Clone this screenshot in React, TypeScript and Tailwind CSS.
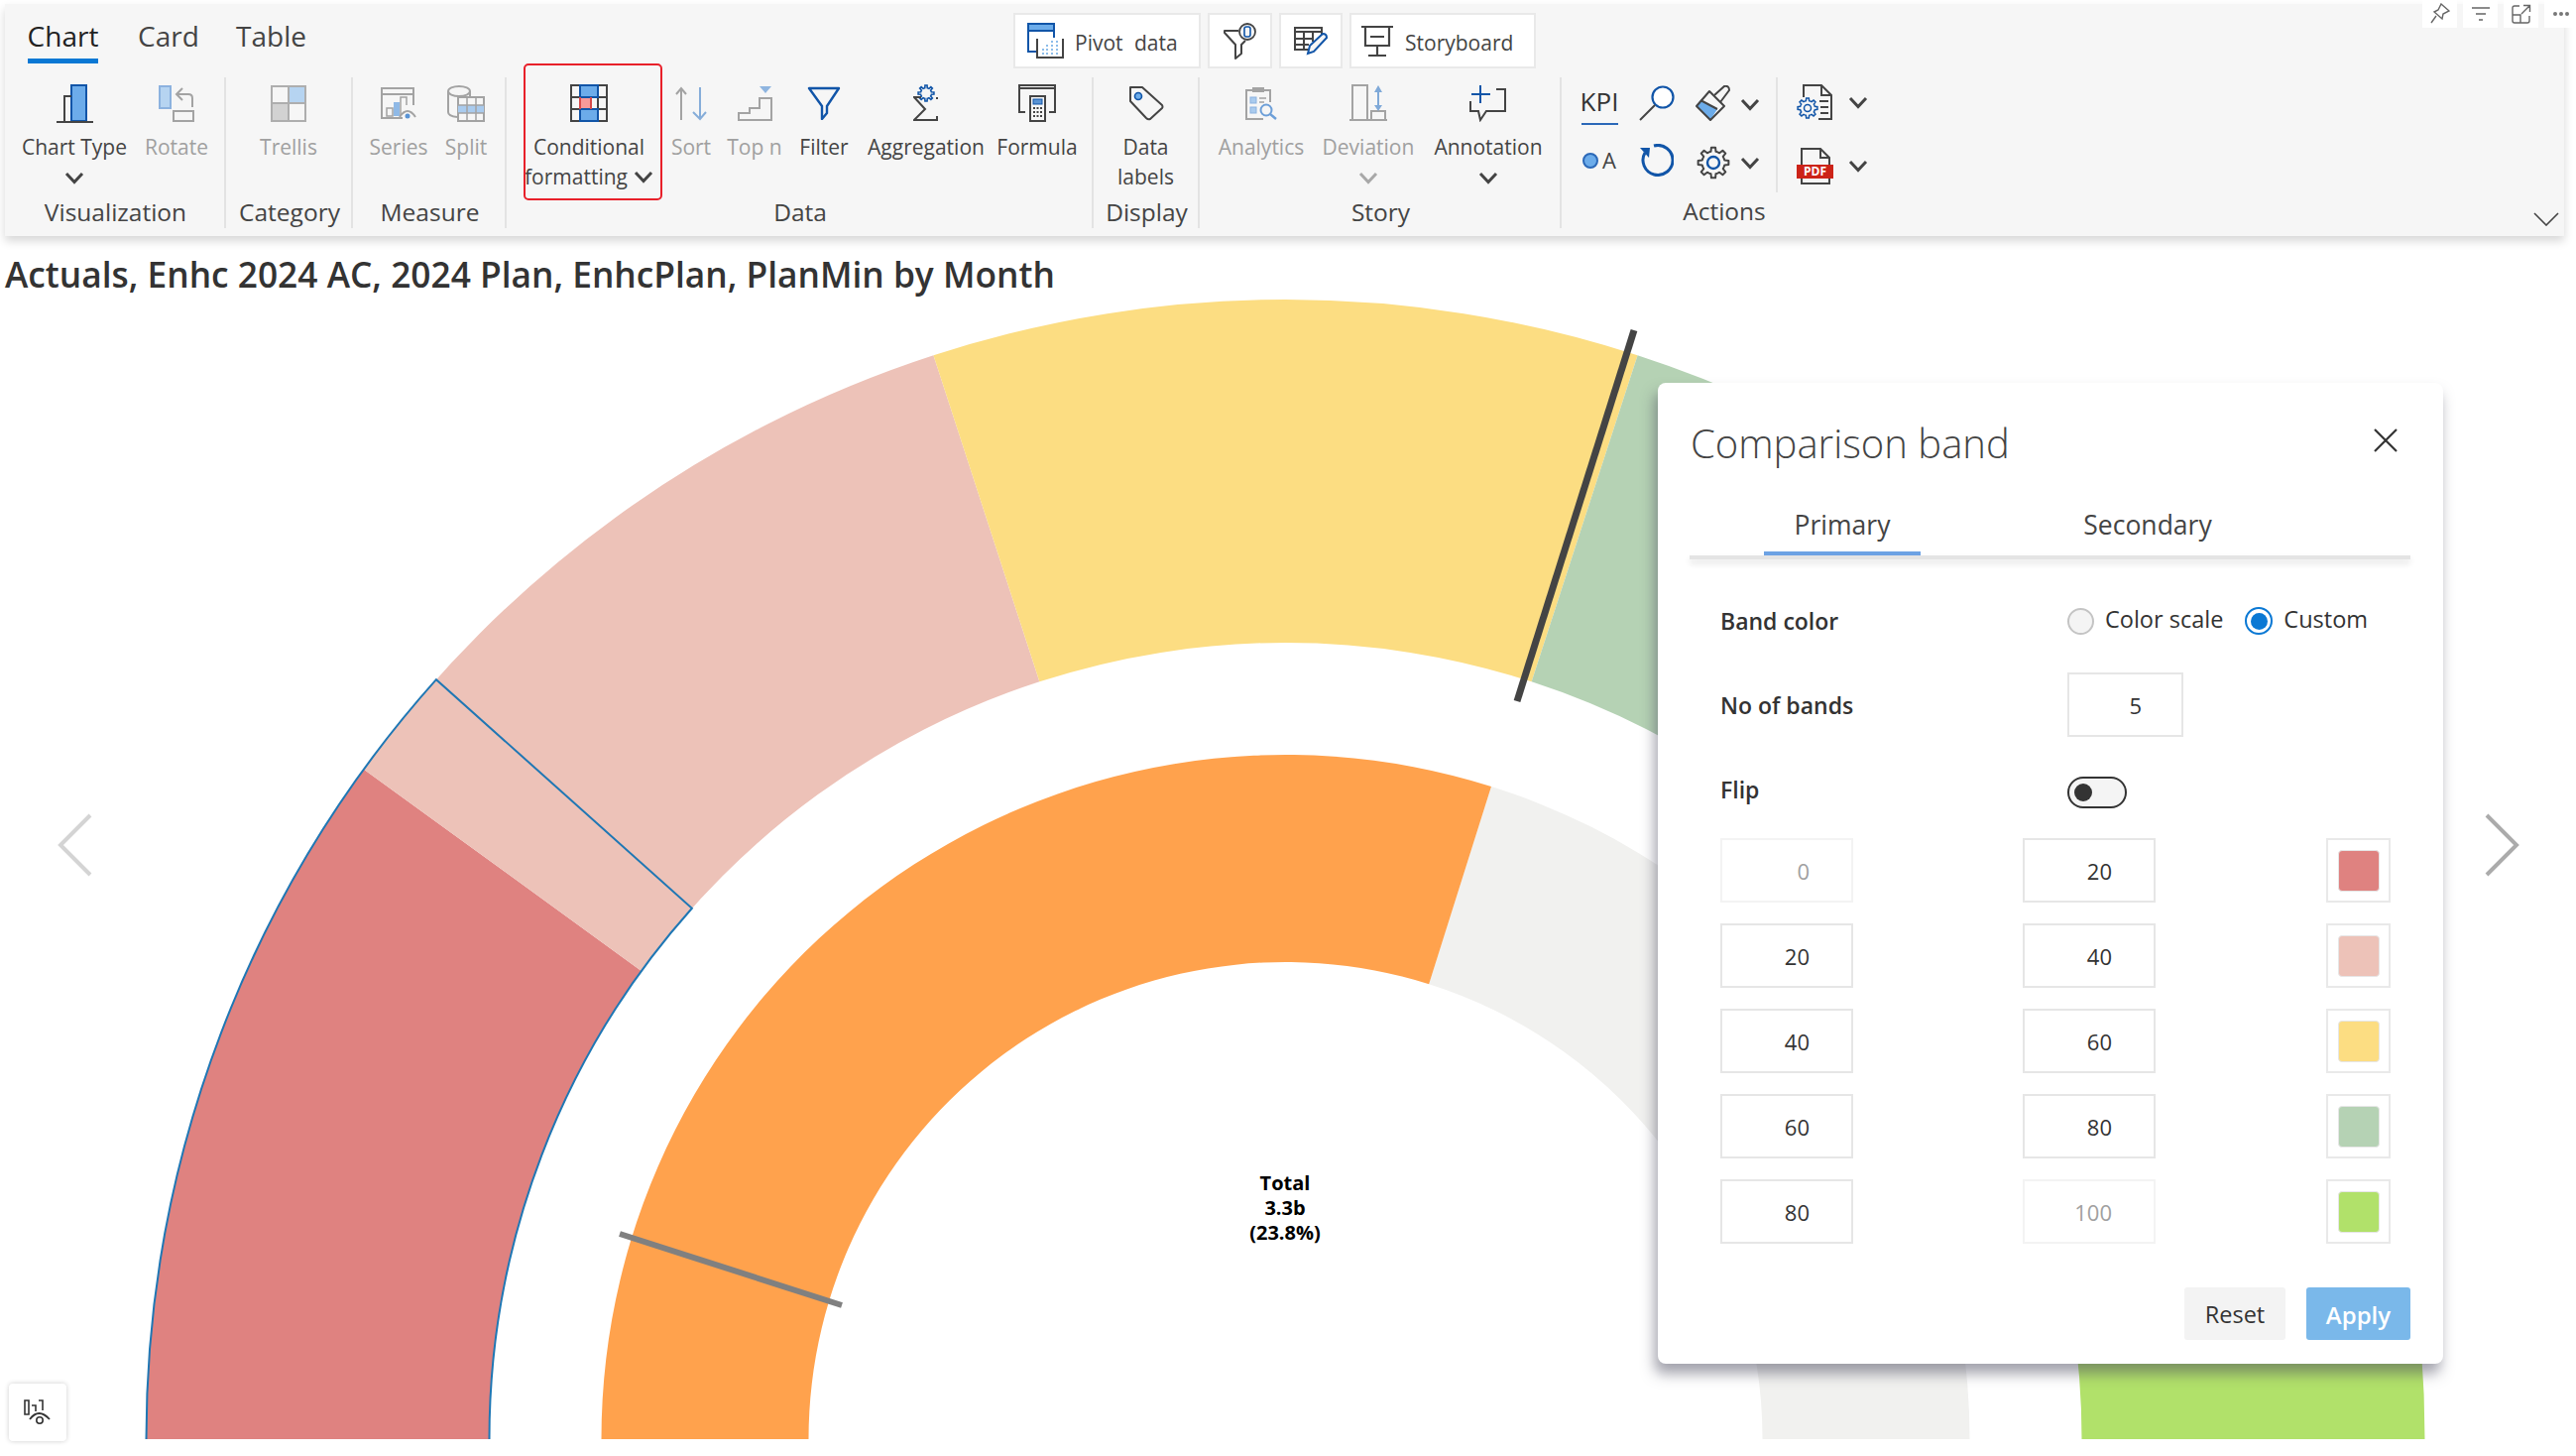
import type { ReactNode } from "react";

const BLUE = "#1155a8";
const SKY = "#6cacea";
const INK = "#444444";
const MUTE = "#a3a3a3";

// gauge geometry, in page pixels
const CX = 1296.5;
const CY = 1451;

function polar(r: number, deg: number) {
  const a = (deg * Math.PI) / 180;
  return [CX - r * Math.cos(a), CY - r * Math.sin(a)];
}

function band(r0: number, r1: number, a: number, b: number) {
  const [x1, y1] = polar(r1, a);
  const [x2, y2] = polar(r1, b);
  const [x3, y3] = polar(r0, b);
  const [x4, y4] = polar(r0, a);
  return `M${x1} ${y1} A${r1} ${r1} 0 0 1 ${x2} ${y2} L${x3} ${y3} A${r0} ${r0} 0 0 0 ${x4} ${y4} Z`;
}

function gear(cx: number, cy: number, out: number, inn: number, teeth: number) {
  const pts: string[] = [];
  for (let i = 0; i < teeth; i++) {
    const step = (Math.PI * 2) / teeth;
    const t = i * step;
    const list: [number, number][] = [
      [inn, t - step * 0.5],
      [inn, t - step * 0.28],
      [out, t - step * 0.17],
      [out, t + step * 0.17],
      [inn, t + step * 0.28],
    ];
    list.forEach(([r, ang]) => pts.push(`${cx + r * Math.cos(ang)} ${cy + r * Math.sin(ang)}`));
  }
  return `M${pts.join(" L")} Z`;
}

function Chevron({ color = INK }: { color?: string }) {
  return (
    <svg width="20" height="13" viewBox="0 0 20 13" fill="none">
      <path d="M2 2 L10 10.5 L18 2" stroke={color} strokeWidth="3" />
    </svg>
  );
}

function ChartTypeIcon() {
  return (
    <svg width="37" height="39" viewBox="0 0 37 39" fill="none">
      <rect x="15" y="1" width="15" height="36" fill={SKY} stroke={BLUE} strokeWidth="2" />
      <path d="M15 12 H8 V37" stroke={INK} strokeWidth="2" />
      <path d="M0 38 H37" stroke={INK} strokeWidth="2" />
    </svg>
  );
}

function RotateIcon() {
  return (
    <svg width="36" height="37" viewBox="0 0 36 37" fill="none">
      <rect x="1" y="1" width="11" height="22" fill="#b6d4f1" stroke="#8cb2df" strokeWidth="2" />
      <path d="M34 22 V13 Q34 9 30 9 H18 M24 3 L18 9 L24 15" stroke={MUTE} strokeWidth="2" />
      <rect x="15" y="26" width="20" height="10" stroke={MUTE} strokeWidth="2" />
    </svg>
  );
}

function TrellisIcon() {
  return (
    <svg width="36" height="37" viewBox="0 0 36 37" fill="none">
      <rect x="18" y="1" width="17" height="17" fill="#b6d4f1" />
      <rect x="1" y="18" width="17" height="18" fill="#d2d2d2" />
      <path d="M1 1 H35 V36 H1 Z M18 1 V36 M1 18 H35" stroke="#aeaeae" strokeWidth="2" />
    </svg>
  );
}

function SeriesIcon() {
  return (
    <svg width="36" height="33" viewBox="0 0 36 33" fill="none">
      <path d="M22 31 H1 V1 H33 V18 M1 7 H33" stroke={MUTE} strokeWidth="2" />
      <rect x="6" y="21" width="6" height="8" stroke={MUTE} strokeWidth="1.5" />
      <rect x="13" y="15" width="6" height="14" fill="#8fb9e6" />
      <path d="M20 28 V10 H26 V18" stroke={MUTE} strokeWidth="1.5" />
      <path d="M19 30 Q27 18 35 30" stroke={MUTE} strokeWidth="2" />
      <circle cx="27" cy="29" r="2.5" fill="#5b94d4" />
    </svg>
  );
}

function SplitIcon() {
  return (
    <svg width="38" height="37" viewBox="0 0 38 37" fill="none">
      <ellipse cx="12" cy="6" rx="11" ry="5" stroke={MUTE} strokeWidth="2" />
      <path d="M1 6 V27 Q1 31 10 32 M23 6 V11" stroke={MUTE} strokeWidth="2" />
      <rect x="11" y="12" width="26" height="24" fill="#f6f6f6" stroke={MUTE} strokeWidth="2" />
      <rect x="11" y="20" width="26" height="8" fill="#a9cbee" />
      <path d="M20 12 V36 M29 12 V36 M11 20 H37 M11 28 H37" stroke={MUTE} strokeWidth="1.5" />
    </svg>
  );
}

function ConditionalIcon() {
  return (
    <svg width="38" height="38" viewBox="0 0 38 38" fill="none">
      <rect x="10" y="1" width="18" height="12" fill={SKY} />
      <rect x="10" y="25" width="18" height="12" fill={SKY} />
      <rect x="10" y="13" width="11" height="12" fill="#f79a9a" />
      <path d="M1 1 H37 V37 H1 Z M1 13 H37 M1 25 H37 M10 1 V37 M28 1 V37" stroke={INK} strokeWidth="2" />
      <path d="M10 1 H28 V13 H10 Z M10 25 H28 V37 H10 Z" stroke={BLUE} strokeWidth="2" />
      <path d="M10 13 V25 M21 13 V25" stroke="#d84a4a" strokeWidth="2" />
    </svg>
  );
}

function SortIcon() {
  return (
    <svg width="32" height="35" viewBox="0 0 32 35" fill="none">
      <path d="M6 34 V2 M1 8 L6 2 L11 8" stroke={MUTE} strokeWidth="2" />
      <path d="M25 1 V33 M18 26 L25 33 L31 26" stroke="#86add9" strokeWidth="2" />
    </svg>
  );
}

function TopNIcon() {
  return (
    <svg width="35" height="36" viewBox="0 0 35 36" fill="none">
      <path d="M1 35 H34 V13 H22 V23 H12 V28 H1 Z" stroke={MUTE} strokeWidth="2" />
      <path d="M22 1 H34 L28 8 Z" fill="#8fb5e0" />
    </svg>
  );
}

function FilterIcon() {
  return (
    <svg width="34" height="34" viewBox="0 0 34 34" fill="none">
      <path d="M2 2 H32 L20 20 V27 L15 33 V20 Z" stroke={BLUE} strokeWidth="2.4" strokeLinejoin="round" />
    </svg>
  );
}

function AggregationIcon() {
  return (
    <svg width="26" height="38" viewBox="0 0 26 38" fill="none">
      <path d={gear(13, 9, 8, 5.5, 8)} stroke={BLUE} strokeWidth="1.6" />
      <path d="M24 15 V13 M8 13 H1 L12 25 L1 36 H24 V32" stroke={INK} strokeWidth="2" />
    </svg>
  );
}

function FormulaIcon() {
  return (
    <svg width="38" height="38" viewBox="0 0 38 38" fill="none">
      <path d="M7 28 H1 V1 H37 V28 H31 M1 4 H37" stroke={INK} strokeWidth="2" />
      <rect x="12" y="12" width="15" height="25" fill="#f6f6f6" stroke={INK} strokeWidth="2" />
      <rect x="15" y="15" width="9" height="5" fill="#5b94d4" stroke={BLUE} />
      <path
        d="M15 24 H17 M18.5 24 H20.5 M22 24 H24 M15 28 H17 M18.5 28 H20.5 M22 28 H24 M15 32 H17 M18.5 32 H20.5 M22 32 H24"
        stroke={INK}
        strokeWidth="2"
      />
    </svg>
  );
}

function TagIcon() {
  return (
    <svg width="36" height="36" viewBox="0 0 36 36" fill="none">
      <path d="M2 2 H14 L34 20 Q35 22 34 23 L22 34 Q20 35 18 33 L2 16 Z" stroke={INK} strokeWidth="2" strokeLinejoin="round" />
      <circle cx="10" cy="11" r="3.5" fill={SKY} stroke={BLUE} strokeWidth="1.6" />
    </svg>
  );
}

function AnalyticsIcon() {
  return (
    <svg width="33" height="34" viewBox="0 0 33 34" fill="none">
      <path d="M25 16 V4 H1 V33 H18" stroke={MUTE} strokeWidth="2" />
      <rect x="7" y="1" width="12" height="5" fill={MUTE} />
      <rect x="5" y="11" width="6" height="6" fill="#a9cbee" stroke="#8cb2df" />
      <rect x="5" y="21" width="6" height="6" fill="#a9cbee" stroke="#8cb2df" />
      <path d="M14 12 H21 M14 16 H19" stroke={MUTE} strokeWidth="1.5" />
      <circle cx="21" cy="24" r="5.5" stroke="#6d9fd8" strokeWidth="2" />
      <path d="M25 28 L31 33" stroke="#6d9fd8" strokeWidth="2.4" />
    </svg>
  );
}

function DeviationIcon() {
  return (
    <svg width="38" height="38" viewBox="0 0 38 38" fill="none">
      <path d="M0 36 H38 M3 36 V1 H18 V36" stroke={MUTE} strokeWidth="2" />
      <rect x="22" y="27" width="14" height="9" stroke={MUTE} strokeWidth="2" />
      <path d="M29 6 V24" stroke="#7fa9d8" strokeWidth="2" />
      <path d="M25 8 L29 1 L33 8 Z M25 21 L33 21 L29 27 Z" fill="#7fa9d8" />
    </svg>
  );
}

function AnnotationIcon() {
  return (
    <svg width="38" height="37" viewBox="0 0 38 37" fill="none">
      <path d="M27 4 H36 V26 H17 L11 35 L9 26 H1 V16" stroke={INK} strokeWidth="2" />
      <path d="M11 0 V18 M2 9 H21" stroke={BLUE} strokeWidth="2" />
    </svg>
  );
}

function SearchIcon() {
  return (
    <svg width="36" height="36" viewBox="0 0 36 36" fill="none">
      <circle cx="24" cy="12" r="10.5" fill="#ffffff" stroke={BLUE} strokeWidth="2.2" />
      <path d="M16 20 L1 35" stroke={INK} strokeWidth="2" />
    </svg>
  );
}

function BrushIcon() {
  return (
    <svg width="36" height="36" viewBox="0 0 36 36" fill="none">
      <path d="M1 20 L15 35 L22 24 L5 15 Z" fill={SKY} />
      <path d="M1 21 L14 6 L29 21 L15 35 Z M5 15 L22 24" stroke={INK} strokeWidth="2" strokeLinejoin="round" />
      <path d="M19 10 L29 1 Q34 0 34 5 L25 17" stroke={INK} strokeWidth="2" />
    </svg>
  );
}

function RefreshIcon() {
  return (
    <svg width="34" height="33" viewBox="0 0 34 33" fill="none">
      <path d="M14 2 A15 15 0 1 1 5 9" stroke={BLUE} strokeWidth="3" />
      <path d="M0 4 L10 4 L9 14 Z" fill={BLUE} />
    </svg>
  );
}

function GearIcon() {
  return (
    <svg width="34" height="34" viewBox="0 0 34 34" fill="none">
      <path d={gear(17, 17, 15.5, 11.5, 8)} stroke={INK} strokeWidth="2" strokeLinejoin="round" />
      <circle cx="17" cy="17" r="6" stroke={BLUE} strokeWidth="2.4" />
    </svg>
  );
}

function DocGearIcon() {
  return (
    <svg width="36" height="36" viewBox="0 0 36 36" fill="none">
      <path d="M7 13 V1 H25 L35 11 V35 H22 M25 1 V11 H35" stroke={INK} strokeWidth="2" />
      <path d="M23 17 H32 M24 23 H32 M24 29 H32" stroke={INK} strokeWidth="2" />
      <path d={gear(11, 24, 10, 7.5, 8)} fill="#f6f6f6" stroke={BLUE} strokeWidth="1.5" />
      <circle cx="11" cy="24" r="3.5" stroke={BLUE} strokeWidth="1.5" />
    </svg>
  );
}

function PdfIcon() {
  return (
    <div className="relative h-[37px] w-[37px]">
      <svg width="37" height="37" viewBox="0 0 37 37" fill="none">
        <path d="M5 22 V1 H24 L33 10 V22 M24 1 V10 H33 M5 27 V36 H33 V27" stroke={INK} strokeWidth="2" />
      </svg>
      <div className="absolute left-0 top-[17px] flex h-[14px] w-[37px] items-center justify-center bg-[#cc2318] text-[12px] font-bold leading-none text-white">
        PDF
      </div>
    </div>
  );
}

function PivotIcon() {
  return (
    <svg width="38" height="37" viewBox="0 0 38 37" fill="none">
      <rect x="1" y="1" width="26" height="7" fill={SKY} />
      <path d="M10 29 H1 V1 H27 V15 M1 8 H27" stroke={BLUE} strokeWidth="2" />
      <path d="M10 16 V35 H36 V16" stroke={INK} strokeWidth="2" />
      <path
        d="M24 19 H26 M29 19 H31 M19 23 H21 M24 23 H26 M29 23 H31 M15 27 H17 M19 27 H21 M24 27 H26 M29 27 H31 M15 31 H17 M19 31 H21 M24 31 H26 M29 31 H31"
        stroke="#8dbdea"
        strokeWidth="2"
      />
    </svg>
  );
}

function FunnelDbIcon() {
  return (
    <svg width="33" height="37" viewBox="0 0 33 37" fill="none">
      <path d="M15 8 H1 V10 L12 22 V36 L18 31 V22 L22 18" stroke={INK} strokeWidth="2" strokeLinejoin="round" />
      <circle cx="24" cy="9" r="8" fill="#f6f6f6" stroke={INK} strokeWidth="1.8" />
      <rect x="21" y="4" width="6" height="10" rx="2" stroke={BLUE} strokeWidth="1.6" />
    </svg>
  );
}

function TableEditIcon() {
  return (
    <svg width="34" height="30" viewBox="0 0 34 30" fill="none">
      <path d="M15 24 H1 V2 H28 V10 M1 2 H28 V6 H1 Z M1 13 H20 M1 19 H15 M10 6 V24 M19 6 V16" stroke={INK} strokeWidth="2" />
      <path d="M14 28 L16 20 L29 8 Q33 8 33 12 L20 26 Z" fill="#f6f6f6" stroke={BLUE} strokeWidth="2" />
    </svg>
  );
}

function BoardIcon() {
  return (
    <svg width="32" height="31" viewBox="0 0 32 31" fill="none">
      <path d="M0 1 H32 M4 1 V20 H28 V1 M16 20 V29 M7 30 H25" stroke={INK} strokeWidth="2.2" />
      <path d="M9 11 H23" stroke={INK} strokeWidth="2" />
    </svg>
  );
}

function RibbonItem({
  width,
  icon,
  label,
  second,
  chevron,
  muted,
}: {
  width: string;
  icon: ReactNode;
  label: string;
  second?: string;
  chevron?: boolean;
  muted?: boolean;
}) {
  return (
    <div className={`flex shrink-0 flex-col items-center pt-[6px] ${width}`}>
      <div className="flex h-[40px] items-center justify-center">{icon}</div>
      <div className={`mt-[9px] whitespace-nowrap text-[21px] leading-[30px] ${muted ? "text-[#a0a0a0]" : "text-[#444]"}`}>
        {label}
      </div>
      {second && <div className={`whitespace-nowrap text-[21px] leading-[30px] ${muted ? "text-[#a0a0a0]" : "text-[#444]"}`}>{second}</div>}
      {chevron && (
        <div className="mt-[8px] flex h-[16px] items-center">
          <Chevron color={muted ? "#a8a8a8" : INK} />
        </div>
      )}
    </div>
  );
}

function Group({ width, title, border = true, children }: { width: string; title: string; border?: boolean; children: ReactNode }) {
  return (
    <div className={`flex h-[152px] shrink-0 flex-col justify-between ${width} ${border ? "border-r-2 border-[#e3e3e3]" : ""}`}>
      <div className="flex h-[121px]">{children}</div>
      <div className="mb-[1px] pl-[2px] text-center text-[24.5px] leading-[30px] text-[#444]">{title}</div>
    </div>
  );
}

function TopButton({ width, children }: { width: string; children: ReactNode }) {
  return (
    <div className={`flex h-[56px] shrink-0 items-center border-2 border-[#e9e9e9] bg-white text-[21px] text-[#444] ${width}`}>
      {children}
    </div>
  );
}

function ActionCell({ width, children }: { width: string; children: ReactNode }) {
  return <div className={`flex shrink-0 items-center justify-center ${width}`}>{children}</div>;
}

function Ribbon() {
  return (
    <div className="ml-[5px] mt-[4px] h-[234px] w-[2581px] bg-[#f6f6f6] shadow-[0_5px_9px_rgba(0,0,0,0.16)]">
      <div className="flex h-[74px]">
        <div className="flex w-[1017px] shrink-0 gap-[42px] pl-[23px] text-[28px] text-[#444]">
          <div className="flex h-[60px] w-[71px] flex-col items-center justify-end border-b-[5px] border-[#0a78d4] pb-[2px] text-[#222]">
            Chart
          </div>
          <div className="flex h-[60px] w-[58px] flex-col items-center justify-end pb-[7px]">Card</div>
          <div className="flex h-[60px] w-[65px] flex-col items-center justify-end pb-[7px]">Table</div>
        </div>
        <div className="mt-[9px] flex gap-[7px]">
          <TopButton width="w-[189px]">
            <div className="ml-[12px] mr-[10px] flex">
              <PivotIcon />
            </div>
            <span className="pt-[5px] [word-spacing:6px]">Pivot data</span>
          </TopButton>
          <TopButton width="w-[65px] justify-center">
            <FunnelDbIcon />
          </TopButton>
          <TopButton width="w-[64px] justify-center">
            <TableEditIcon />
          </TopButton>
          <TopButton width="w-[188px]">
            <div className="ml-[10px] mr-[12px] flex">
              <BoardIcon />
            </div>
            <span className="pt-[5px]">Storyboard</span>
          </TopButton>
        </div>
      </div>

      <div className="flex">
        <Group width="w-[223px]" title="Visualization">
          <div className="w-[10px] shrink-0" />
          <RibbonItem width="w-[120px]" icon={<ChartTypeIcon />} label="Chart Type" chevron />
          <RibbonItem width="w-[86px]" icon={<RotateIcon />} label="Rotate" muted />
        </Group>
        <Group width="w-[128px]" title="Category">
          <RibbonItem width="w-[126px]" icon={<TrellisIcon />} label="Trellis" muted />
        </Group>
        <Group width="w-[155px]" title="Measure">
          <div className="w-[12px] shrink-0" />
          <RibbonItem width="w-[68px]" icon={<SeriesIcon />} label="Series" muted />
          <RibbonItem width="w-[68px]" icon={<SplitIcon />} label="Split" muted />
        </Group>
        <Group width="w-[592px]" title="Data">
          <div className="w-[18px] shrink-0" />
          <div className="relative flex w-[138px] shrink-0 flex-col items-center pr-[8px] pt-[6px]">
            <div className="absolute -left-[1px] -top-[14px] h-[138px] w-[140px] rounded-[5px] border-2 border-[#e8202a]" />
            <div className="flex h-[40px] items-center">
              <ConditionalIcon />
            </div>
            <div className="mt-[9px] whitespace-nowrap text-[21px] leading-[30px] text-[#444]">Conditional</div>
            <div className="flex items-center gap-[6px] whitespace-nowrap text-[21px] leading-[30px] text-[#444]">
              formatting
              <Chevron />
            </div>
          </div>
          <RibbonItem width="w-[60px]" icon={<SortIcon />} label="Sort" muted />
          <RibbonItem width="w-[68px]" icon={<TopNIcon />} label="Top n" muted />
          <RibbonItem width="w-[72px]" icon={<FilterIcon />} label="Filter" />
          <RibbonItem width="w-[134px]" icon={<AggregationIcon />} label="Aggregation" />
          <RibbonItem width="w-[90px]" icon={<FormulaIcon />} label="Formula" />
        </Group>
        <Group width="w-[107px]" title="Display">
          <RibbonItem width="w-[105px]" icon={<TagIcon />} label="Data" second="labels" />
        </Group>
        <Group width="w-[365px]" title="Story">
          <div className="w-[14px] shrink-0" />
          <RibbonItem width="w-[96px]" icon={<AnalyticsIcon />} label="Analytics" muted />
          <RibbonItem width="w-[120px]" icon={<DeviationIcon />} label="Deviation" chevron muted />
          <RibbonItem width="w-[122px]" icon={<AnnotationIcon />} label="Annotation" chevron />
        </Group>
        <div className="flex h-[152px] w-[328px] shrink-0 flex-col">
          <div className="flex h-[116px]">
            <div className="flex w-[218px] shrink-0 flex-col border-r-2 border-[#e3e3e3] pl-[12px]">
              <div className="flex h-[52px] items-center">
                <ActionCell width="w-[52px]">
                  <div className="flex h-[44px] w-[37px] flex-col items-center border-b-[2px] border-[#2b68b8] text-[26px] leading-[40px] text-[#333]">
                    KPI
                  </div>
                </ActionCell>
                <ActionCell width="w-[64px]">
                  <SearchIcon />
                </ActionCell>
                <ActionCell width="w-[49px]">
                  <BrushIcon />
                </ActionCell>
                <div className="ml-[3px] flex pt-[3px]">
                  <Chevron />
                </div>
              </div>
              <div className="mt-[8px] flex h-[52px] items-center">
                <ActionCell width="w-[52px]">
                  <div className="flex items-center gap-[4px] pb-[5px] text-[22px] text-[#444]">
                    <span className="h-[16px] w-[16px] rounded-full border-2 border-[#2b68b8] bg-[#6cacea]" />A
                  </div>
                </ActionCell>
                <ActionCell width="w-[64px]">
                  <div className="flex pb-[5px]">
                    <RefreshIcon />
                  </div>
                </ActionCell>
                <ActionCell width="w-[49px]">
                  <GearIcon />
                </ActionCell>
                <div className="ml-[3px] flex">
                  <Chevron />
                </div>
              </div>
            </div>
            <div className="flex flex-col pl-[19px]">
              <div className="flex h-[50px] items-center gap-[16px]">
                <DocGearIcon />
                <Chevron />
              </div>
              <div className="mt-[19px] flex h-[40px] items-center gap-[15px]">
                <PdfIcon />
                <Chevron />
              </div>
            </div>
          </div>
          <div className="mt-[4px] text-center text-[24.5px] leading-[30px] text-[#444]">Actions</div>
        </div>
        <div className="ml-auto mr-[5px] mt-[136px] flex h-[14px]">
          <svg width="26" height="14" viewBox="0 0 26 14" fill="none">
            <path d="M1 1 L13 13 L25 1" stroke={INK} strokeWidth="1.6" />
          </svg>
        </div>
      </div>
    </div>
  );
}

function CornerTools() {
  return (
    <div className="absolute right-0 top-0 flex gap-[6px]">
      <div className="flex h-[28px] w-[35px] items-center justify-center bg-white">
        <svg width="20" height="22" viewBox="0 0 20 22" fill="none">
          <path d="M11 1 L19 8 L13 11 L12 16 L4 9 L8 7 Z M6 13 L1 20" stroke="#666" strokeWidth="1.4" />
        </svg>
      </div>
      <div className="flex h-[28px] w-[35px] items-center justify-center bg-white">
        <svg width="20" height="16" viewBox="0 0 20 16" fill="none">
          <path d="M1 2 H19 M5 8 H15 M8 14 H12" stroke="#666" strokeWidth="1.6" />
        </svg>
      </div>
      <div className="flex h-[28px] w-[35px] items-center justify-center bg-white">
        <svg width="20" height="20" viewBox="0 0 20 20" fill="none">
          <path d="M8 2 H3 Q1 2 1 4 V17 Q1 19 3 19 H16 Q18 19 18 17 V12 M1 11 H9 V19 M10 10 L18 2 M12 1.5 H18.5 V8" stroke="#666" strokeWidth="1.4" />
        </svg>
      </div>
      <div className="flex h-[28px] w-[32px] items-center bg-white pl-[8px]">
        <svg width="18" height="6" viewBox="0 0 18 6" fill="#777">
          <circle cx="3" cy="3" r="2" />
          <circle cx="9" cy="3" r="2" />
          <circle cx="15" cy="3" r="2" />
        </svg>
      </div>
    </div>
  );
}

const BANDS = [
  ["#df8280", 0, 36],
  ["#edc2b8", 36, 72],
  ["#fcdd82", 72, 108],
  ["#b5d2b4", 108, 144],
  ["#b1e16a", 144, 180],
] as const;

function Gauge() {
  const [nx1, ny1] = polar(1149, 41.8);
  const [nx2, ny2] = polar(803, 41.8);
  const [lx, ly] = polar(1149, 0);
  const [ix, iy] = polar(803, 0);
  return (
    <svg width="2598" height="1166" viewBox="0 302 2598 1166" className="block">
      {BANDS.map(([color, a, b]) => (
        <path key={color} d={band(803, 1149, a, b)} fill={color} />
      ))}
      <path
        d={`M${lx} ${ly} A1149 1149 0 0 1 ${nx1} ${ny1} L${nx2} ${ny2} A803 803 0 0 0 ${ix} ${iy}`}
        fill="none"
        stroke="#1f77b4"
        strokeWidth="2"
      />
      <path d={band(481, 690, 107.5, 180)} fill="#f1f1ef" />
      <path d={band(481, 690, 0, 107.5)} fill="#ffa24d" />
      <path d="M1648 333 L1530 707" stroke="#444444" strokeWidth="7" />
      <path d="M625 1244 L849 1316" stroke="#808080" strokeWidth="6" />
    </svg>
  );
}

const RANGE_ROWS = [
  { from: "0", to: "20", color: "bg-[#df8280]", fromOff: true },
  { from: "20", to: "40", color: "bg-[#edc2b8]" },
  { from: "40", to: "60", color: "bg-[#fcdd82]" },
  { from: "60", to: "80", color: "bg-[#b5d2b4]" },
  { from: "80", to: "100", color: "bg-[#b1e16a]", toOff: true },
];

function NumberBox({ value, off }: { value: string; off?: boolean }) {
  return (
    <div
      className={`flex h-[65px] w-[134px] items-center justify-end border-2 pr-[42px] pt-[2px] text-[22px] ${
        off ? "border-[#f3f3f3] text-[#a0a0a0]" : "border-[#e6e6e6] text-[#333]"
      }`}
    >
      {value}
    </div>
  );
}

function BandPanel() {
  return (
    <div className="absolute left-[1672px] top-[84px] h-[989px] w-[792px] rounded-lg bg-white shadow-[-3px_10px_14px_rgba(70,70,90,0.5)]">
      <div className="flex h-[86px] items-end justify-between pl-[33px] pr-[46px]">
        <div className="text-[40px] font-light leading-[50px] text-[#444]">Comparison band</div>
        <div className="mb-[16px] flex">
          <svg width="24" height="24" viewBox="0 0 24 24" fill="none">
            <path d="M1 1 L23 23 M23 1 L1 23" stroke="#333" strokeWidth="2.2" />
          </svg>
        </div>
      </div>
      <div className="ml-[32px] mt-[32px] flex h-[56px] w-[727px] text-[26.5px] leading-[30px] text-[#444]">
        <div className="ml-[75px] w-[158px] border-b-4 border-[#6ca2e4] pt-[10px] text-center">Primary</div>
        <div className="ml-[150px] w-[158px] pt-[10px] text-center">Secondary</div>
      </div>
      <div className="ml-[32px] h-[4px] w-[727px] bg-[#e4e4e4] shadow-[0_4px_6px_rgba(0,0,0,0.12)]" />

      <div className="mt-[42px] flex h-[40px] items-center pl-[63px] text-[23.5px] text-[#333]">
        <div className="w-[350px] text-[23px] font-semibold">Band color</div>
        <span className="h-[27px] w-[27px] rounded-full border-2 border-[#c4c4c4] bg-[#f4f4f4]" />
        <span className="ml-[11px] pb-[2px]">Color scale</span>
        <span className="ml-[22px] flex h-[28px] w-[28px] items-center justify-center rounded-full border-2 border-[#0a78d4]">
          <span className="h-[17px] w-[17px] rounded-full bg-[#0a78d4]" />
        </span>
        <span className="ml-[11px] pb-[2px]">Custom</span>
      </div>

      <div className="mt-[32px] flex h-[65px] items-center pl-[63px] text-[22px] text-[#333]">
        <div className="w-[350px] pt-[2px] text-[23px] font-semibold">No of bands</div>
        <div className="flex h-[65px] w-[117px] items-center justify-end border-2 border-[#e6e6e6] pr-[40px] pt-[2px]">5</div>
      </div>

      <div className="mt-[40px] flex h-[32px] items-center pl-[63px] text-[23px] text-[#333]">
        <div className="w-[350px] pb-[5px] font-semibold">Flip</div>
        <div className="flex h-[32px] w-[60px] items-center rounded-full border-2 border-[#333] bg-[#f4f4f4] pl-[5px]">
          <span className="h-[18px] w-[18px] rounded-full bg-[#333]" />
        </div>
      </div>

      <div className="mt-[30px] flex flex-col gap-[21px] pl-[63px]">
        {RANGE_ROWS.map((row) => (
          <div key={row.from} className="flex">
            <NumberBox value={row.from} off={row.fromOff} />
            <div className="ml-[171px]">
              <NumberBox value={row.to} off={row.toOff} />
            </div>
            <div className="ml-[172px] flex h-[65px] w-[65px] items-center justify-center border-2 border-[#e9e9e9]">
              <div className={`h-[42px] w-[42px] rounded-[4px] border border-[#e6e6e6] ${row.color}`} />
            </div>
          </div>
        ))}
      </div>

      <div className="mr-[33px] mt-[44px] flex justify-end gap-[21px]">
        <div className="flex h-[53px] w-[102px] items-center justify-center rounded-[3px] bg-[#f3f3f3] pt-[2px] text-[23.5px] text-[#333]">Reset</div>
        <div className="flex h-[53px] w-[105px] items-center justify-center rounded-[3px] bg-[#7ab8ea] pt-[2px] text-[24px] font-semibold text-white">Apply</div>
      </div>
    </div>
  );
}

export default function App() {
  return (
    <div className="relative h-[1468px] w-[2598px] overflow-hidden bg-white font-['Open_Sans','Noto_Sans',sans-serif]">
      <CornerTools />
      <Ribbon />
      <div className="ml-[5px] mt-[13px] h-[51px] text-[35.3px] font-semibold leading-[50px] text-[#333]">
        Actuals, Enhc 2024 AC, 2024 Plan, EnhcPlan, PlanMin by Month
      </div>

      <div className="relative h-[1166px] w-[2598px]">
        <Gauge />

        <div className="absolute left-[1196px] top-[878px] w-[200px] text-center text-[20px] font-bold leading-[25px] text-black">
          <div>Total</div>
          <div>3.3b</div>
          <div>(23.8%)</div>
        </div>

        <div className="absolute left-[58px] top-[518px] flex">
          <svg width="36" height="64" viewBox="0 0 36 64" fill="none">
            <path d="M33 2 L3 32 L33 62" stroke="#d4d4d4" strokeWidth="4" />
          </svg>
        </div>
        <div className="absolute left-[2505px] top-[518px] flex">
          <svg width="36" height="64" viewBox="0 0 36 64" fill="none">
            <path d="M3 2 L33 32 L3 62" stroke="#ababab" strokeWidth="4" />
          </svg>
        </div>

        <BandPanel />

        <div className="absolute left-[9px] top-[1093px] flex h-[58px] w-[58px] items-center justify-center rounded-[4px] bg-white shadow-[0_0_5px_rgba(0,0,0,0.2)]">
          <svg width="28" height="26" viewBox="0 0 28 26" fill="none">
            <path d="M1 1 H5 V15 H1 Z M8 6 H12 V12 M15 1 H19 V11" stroke="#333" strokeWidth="1.6" />
            <path d="M6 20 Q15 8 26 20" stroke="#333" strokeWidth="1.8" />
            <circle cx="16" cy="21" r="3.2" stroke="#333" strokeWidth="1.6" />
          </svg>
        </div>
      </div>
    </div>
  );
}
